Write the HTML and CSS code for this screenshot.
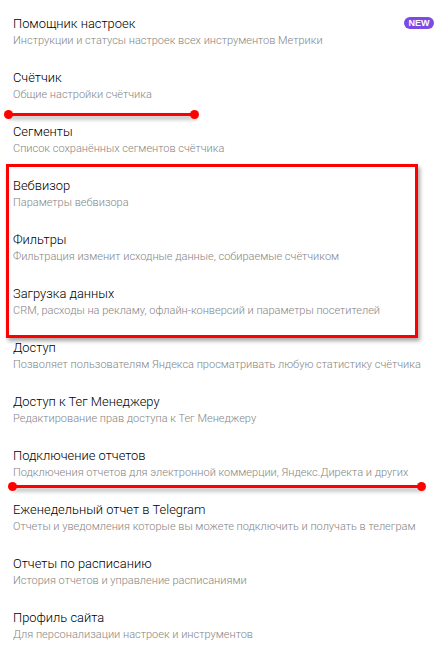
FILE: index.html
```html
<!DOCTYPE html>
<html lang="ru">
<head>
  <meta charset="UTF-8" />
  <title>Настройки</title>
  <link rel="stylesheet" href="styles.css">
</head>
<body>

  <!-- Settings list -->
  <ul class="settings">
    <li class="item">
      <div class="item-title">Помощник настроек <span class="badge">NEW</span></div>
      <div class="item-sub">Инструкции и статусы настроек всех инструментов Метрики</div>
    </li>
    <li class="item">
      <div class="item-title">Счётчик</div>
      <div class="item-sub">Общие настройки счётчика</div>
    </li>
    <li class="item">
      <div class="item-title">Сегменты</div>
      <div class="item-sub">Список сохранённых сегментов счётчика</div>
    </li>
    <li class="item">
      <div class="item-title">Вебвизор</div>
      <div class="item-sub">Параметры вебвизора</div>
    </li>
    <li class="item">
      <div class="item-title">Фильтры</div>
      <div class="item-sub">Фильтрация изменит исходные данные, собираемые счётчиком</div>
    </li>
    <li class="item">
      <div class="item-title">Загрузка данных</div>
      <div class="item-sub">CRM, расходы на рекламу, офлайн-конверсий и параметры посетителей</div>
    </li>
    <li class="item">
      <div class="item-title">Доступ</div>
      <div class="item-sub">Позволяет пользователям Яндекса просматривать любую статистику счётчика</div>
    </li>
    <li class="item">
      <div class="item-title">Доступ к Тег Менеджеру</div>
      <div class="item-sub">Редактирование прав доступа к Тег Менеджеру</div>
    </li>
    <li class="item">
      <div class="item-title">Подключение отчетов</div>
      <div class="item-sub">Подключения отчетов для электронной коммерции, Яндекс.Директа и других</div>
    </li>
    <li class="item">
      <div class="item-title">Еженедельный отчет в Telegram</div>
      <div class="item-sub">Отчеты и уведомления которые вы можете подключить и получать в телеграм</div>
    </li>
    <li class="item">
      <div class="item-title">Отчеты по расписанию</div>
      <div class="item-sub">История отчетов и управление расписаниями</div>
    </li>
    <li class="item">
      <div class="item-title">Профиль сайта</div>
      <div class="item-sub">Для персонализации настроек и инструментов</div>
    </li>
  </ul>

  <!-- Red annotations drawn over the list -->
  <div class="mark-box"></div>
  <div class="mark-line mark-line-1"></div>
  <div class="mark-line mark-line-2"></div>

</body>
</html>
```

FILE: styles.css
```css
* { margin: 0; padding: 0; box-sizing: border-box; }

html, body {
  background: #fff;
  font-family: Roboto, 'Noto Sans', sans-serif;
  color: #222;
}

body {
  position: relative;
  width: 442px;
  height: 661px;
  overflow: hidden;
}

.settings {
  list-style: none;
  padding: 15px 8px 0 13px;
}

.item {
  height: 54px;
}

.item-title {
  display: flex;
  justify-content: space-between;
  align-items: center;
  font-size: 12.9px;
  font-weight: 300;
  line-height: 18px;
  color: #000;
}

.item-sub {
  font-size: 11px;
  font-weight: 300;
  line-height: 16px;
  color: #858585;
  white-space: nowrap;
}

.badge {
  display: inline-block;
  width: 30px;
  height: 12px;
  margin-top: -2px;
  border-radius: 6px;
  background: #7b4be3;
  color: #fff;
  font-family: 'Liberation Sans', Arial, sans-serif;
  font-size: 9px;
  font-weight: bold;
  line-height: 12px;
  text-align: center;
}

/* annotations */
.mark-box {
  position: absolute;
  left: 6px;
  top: 164px;
  width: 412px;
  height: 174px;
  border: 3px solid #f00;
  box-shadow: 2px 3px 4px rgba(0, 0, 0, 0.35);
}

.mark-line {
  position: absolute;
  height: 3px;
  background: #f00;
  box-shadow: 2px 3px 4px rgba(0, 0, 0, 0.35);
}

.mark-line::before,
.mark-line::after {
  content: '';
  position: absolute;
  top: -3px;
  width: 9px;
  height: 9px;
  border-radius: 50%;
  background: #f00;
}

.mark-line::before { left: -4px; }
.mark-line::after { right: -4px; }

.mark-line-1 { left: 8px; top: 113px; width: 187px; }
.mark-line-2 { left: 12px; top: 485px; width: 410px; }
```
